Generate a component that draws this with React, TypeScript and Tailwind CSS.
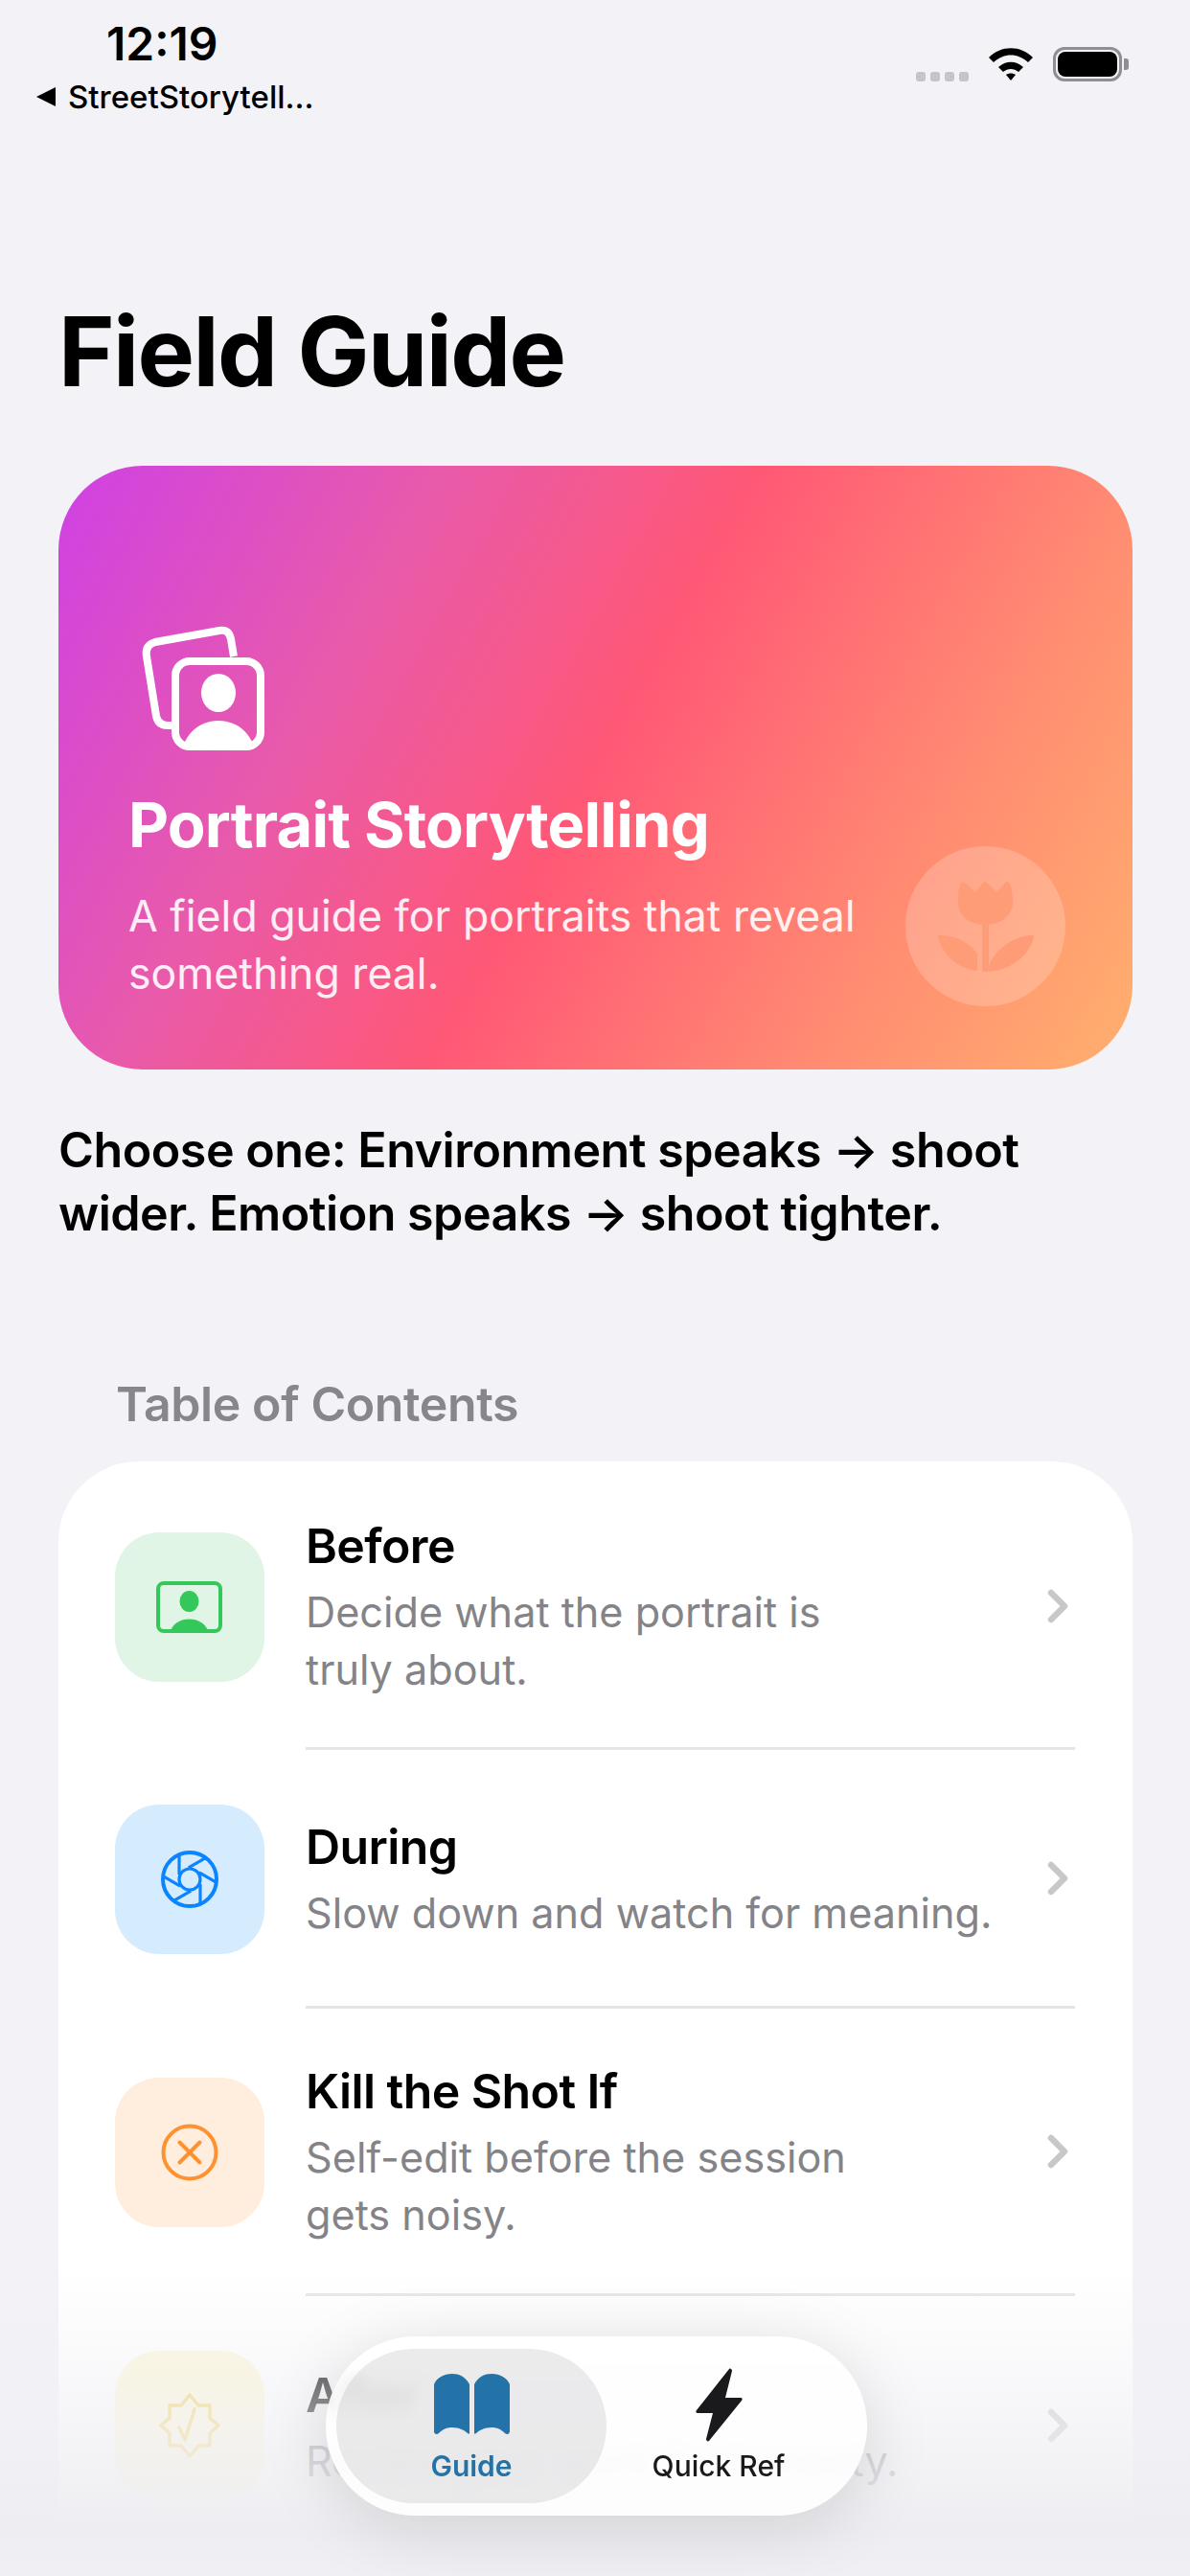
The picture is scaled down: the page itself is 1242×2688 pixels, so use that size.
const font = "font-['Inter',sans-serif]";

function PortraitIcon() {
  return (
    <svg width="130" height="131" viewBox="0 0 130 131" className="block">
      <path d="M32 104H28Q18 104 16 94L6 32Q4 20 15 17L82 5Q92 3 94 14L97 32" fill="none" stroke="white" strokeWidth="8" />
      <rect x="36" y="37" width="89" height="89" rx="15" fill="none" stroke="white" strokeWidth="8" />
      <ellipse cx="81" cy="70" rx="18" ry="20" fill="white" />
      <path d="M44 126C50 108 65 99 81 99C97 99 112 108 118 126z" fill="white" />
    </svg>
  );
}

function TulipIcon() {
  return (
    <svg width="101" height="94" viewBox="0 0 101 94" fill="#ff9c78" className="block">
      <path d="M22 22C22 10 23 4 25 1C26 0 28 0 29 1L40 11L48 1C49 0 51 0 52 1L62 11L71 1C72 0 74 0 75 1C77 4 79 10 79 22C79 36 66 45 50 45C35 45 22 36 22 22Z" />
      <path d="M47 45h7v43C60 72 78 57 99 56c2 0 2 1 2 3C94 80 74 94 50 94c-2 0-3-1-3-3z" />
      <path d="M1 59c-1-2 0-3 2-3 16 0 30 7 39 19v18C23 91 8 79 1 59z" />
    </svg>
  );
}

function PersonCardIcon() {
  return (
    <svg width="70" height="54" viewBox="0 0 70 54" className="block">
      <rect x="2" y="2" width="65" height="50" rx="6" fill="none" stroke="#34c759" strokeWidth="4" />
      <ellipse cx="34.5" cy="21" rx="10" ry="11" fill="#34c759" />
      <path d="M15 52a20 16 0 0 1 39 0z" fill="#34c759" />
    </svg>
  );
}

function ApertureIcon() {
  return (
    <svg width="60" height="60" viewBox="0 0 60 60" fill="none" stroke="#0a84ff" strokeWidth="3.2" className="block">
      <circle cx="30" cy="30" r="28" strokeWidth="4" />
      <circle cx="30" cy="30" r="11" />
      {[0, 60, 120, 180, 240, 300].map((deg) => (
        <line key={deg} x1="19" y1="5" x2="19" y2="25" transform={`rotate(${deg} 30 30)`} />
      ))}
    </svg>
  );
}

function XCircleIcon() {
  return (
    <svg width="60" height="60" viewBox="0 0 60 60" fill="none" stroke="#ff9230" strokeWidth="4" className="block">
      <circle cx="30" cy="30" r="27.5" />
      <path d="M19.5 19.5l21 21M40.5 19.5l-21 21" strokeLinecap="round" />
    </svg>
  );
}

function SealIcon() {
  return (
    <svg width="66" height="68" viewBox="0 0 66 68" fill="none" stroke="#f5d265" strokeWidth="3.5" className="block">
      <path d="M33 2l9 11h12v13l9 8-9 8v13H42l-9 11-9-11H12V42l-9-8 9-8V13h12z" strokeLinejoin="round" />
      <path d="M22 36l6 13 10-32" strokeLinecap="round" strokeLinejoin="round" />
    </svg>
  );
}

function Chevron() {
  return (
    <svg width="22" height="36" viewBox="0 0 22 36" fill="none" stroke="#c8c8ca" strokeWidth="6.5" strokeLinecap="round" strokeLinejoin="round" className="block mr-[7px]">
      <path d="M4 4l14 14L4 32" />
    </svg>
  );
}

const rows = [
  {
    title: "Before",
    sub: ["Decide what the portrait is", "truly about."],
    tile: "bg-[#e0f5e5]",
    icon: <PersonCardIcon />,
    rowClass: "h-[298px]",
  },
  {
    title: "During",
    sub: ["Slow down and watch for meaning."],
    tile: "bg-[#d5ebfe]",
    icon: <ApertureIcon />,
    rowClass: "h-[270px]",
  },
  {
    title: "Kill the Shot If",
    sub: ["Self-edit before the session", "gets noisy."],
    tile: "bg-[#ffeede]",
    icon: <XCircleIcon />,
    rowClass: "h-[300px]",
  },
  {
    title: "After",
    sub: ["Review your work for honesty."],
    tile: "bg-[#fdf7d9]",
    icon: <SealIcon />,
    rowClass: "h-[270px]",
  },
];

export default function App() {
  return (
    <div className={`relative w-[1242px] h-[2688px] overflow-hidden bg-[#f2f2f7] ${font}`}>
      {/* Status bar */}
      <div className="flex justify-between h-[125px] pl-[37px] pr-[64px]">
        <div className="flex flex-col">
          <div className="pl-[74px] pt-[20px] text-[48px] leading-[52px] font-semibold text-black">12:19</div>
          <div className="flex items-center gap-[12px] mt-[11px]">
            <svg width="22" height="22" viewBox="0 0 22 22"><path d="M1 11L21 1v20z" fill="black" /></svg>
            <span className="text-[33px] leading-[36px] font-medium text-black">StreetStorytell...</span>
          </div>
        </div>
        <div className="flex items-end gap-[20px] h-[85px]">
          <div className="flex gap-[5px]">
            <div className="w-[10px] h-[10px] rounded-[3px] bg-[#c5c5c9]" />
            <div className="w-[10px] h-[10px] rounded-[3px] bg-[#c5c5c9]" />
            <div className="w-[10px] h-[10px] rounded-[3px] bg-[#c5c5c9]" />
            <div className="w-[10px] h-[10px] rounded-[3px] bg-[#c5c5c9]" />
          </div>
          <svg width="48" height="36" viewBox="0 0 48 36" className="block">
            <path d="M1 11C14-2 34-2 47 11l-5 5C31 6 17 6 6 16z" />
            <path d="M11 21c8-7 18-7 26 0l-5 5c-5-4-11-4-16 0z" />
            <path d="M19 29c3-2 7-2 10 0l-5 6z" />
          </svg>
          <div className="flex items-center gap-[2px]">
            <div className="w-[72px] h-[36px] rounded-[12px] border-[3px] border-[#8e8e93] p-[2px]">
              <div className="w-full h-full rounded-[8px] bg-black" />
            </div>
            <div className="w-[5px] h-[12px] rounded-r-[3px] bg-[#8e8e93]" />
          </div>
        </div>
      </div>

      <div className="pl-[61px] pr-[60px]">
        <h1 className="mt-[212px] text-[100px] leading-[60px] font-bold text-black tracking-[-1.6px]">Field Guide</h1>

        {/* Hero */}
        <div className="relative mt-[89px] h-[630px] rounded-[88px] bg-[linear-gradient(119deg,#cf41e4_0%,#e85aab_27%,#ff5876_50%,#ff8a72_76%,#ffb06e_100%)] pl-[73px] pt-[167px] overflow-hidden">
          <div className="ml-[13px]">
            <PortraitIcon />
          </div>
          <div className="mt-[39px] text-[65px] leading-[76px] font-bold text-white tracking-[-0.8px]">Portrait Storytelling</div>
          <div className="mt-[27px] text-[44.6px] leading-[60px] text-white/90">
            A field guide for portraits that reveal
            <br />
            something real.
          </div>
          <div className="absolute left-[884px] top-[397px] w-[167px] h-[167px] rounded-full bg-white/20 flex items-center justify-center">
            <TulipIcon />
          </div>
        </div>

        <p className="mt-[51px] text-[50.2px] leading-[66px] font-semibold text-black tracking-[-0.5px]">
          Choose one: Environment speaks → shoot
          <br />
          wider. Emotion speaks → shoot tighter.
        </p>

        <div className="mt-[136px] pl-[60px] text-[50px] leading-[60px] font-semibold text-[#86868b] tracking-[-0.4px]">Table of Contents</div>

        {/* Contents list */}
        <div className="mt-[30px] rounded-[84px] bg-white pl-[59px] pr-[60px] pt-[3px] pb-[100px]">
          {rows.map((row, i) => (
            <div key={row.title} className={`flex items-center ${row.rowClass}`}>
              <div className={`flex items-center justify-center shrink-0 w-[156px] h-[156px] rounded-[46px] ${row.tile}`}>{row.icon}</div>
              <div className={`flex items-center ml-[43px] flex-1 h-full ${i < rows.length - 1 ? "border-b-[3px] border-[#e5e5e7]" : ""}`}>
                <div className="flex-1 pt-[4px]">
                  <div className="text-[50px] leading-[60px] font-semibold text-black tracking-[-0.6px]">{row.title}</div>
                  <div className="mt-[9px]">
                    {row.sub.map((line) => (
                      <div key={line} className="text-[43.2px] leading-[60px] text-[#848488]">{line}</div>
                    ))}
                  </div>
                </div>
                <Chevron />
              </div>
            </div>
          ))}
        </div>
      </div>

      {/* Bottom fade behind the floating tab bar */}
      <div className="absolute left-0 right-0 bottom-0 h-[320px] bg-[linear-gradient(to_bottom,rgba(242,242,247,0)_0%,rgba(241,241,245,0.66)_50%,#eeeef2_85%,#f0f0f4_100%)]" />

      {/* Floating tab bar */}
      <div className="absolute left-[340px] top-[2438px] w-[565px] h-[187px] rounded-full bg-white/85 backdrop-blur-[8px] shadow-[0_12px_70px_rgba(0,0,0,0.13)] flex items-center pl-[11px]">
        <div className="flex flex-col items-center pt-[19px] w-[282px] h-[161px] rounded-full bg-[#767680]/15">
          <div className="flex items-center justify-center h-[78px]">
            <svg width="79" height="64" viewBox="0 0 79 64" fill="#2473a8" className="block">
              <path d="M37 11C33 3 26 0 19 0C10 0 3 4 0 11V60C0 63 3 64 5 62C9 58 13 56 19 56C26 56 32 59 35 62C36 63 37 63 37 62Z" />
              <path d="M42 11C46 3 53 0 60 0C69 0 76 4 79 11V60C79 63 76 64 74 62C70 58 66 56 60 56C53 56 47 59 44 62C43 63 42 63 42 62Z" />
            </svg>
          </div>
          <span className="mt-[7px] text-[30px] leading-[36px] font-semibold text-[#2473a8]">Guide</span>
        </div>
        <div className="flex flex-col items-center pt-[19px] w-[234px] h-[161px]">
          <div className="flex items-center justify-center h-[78px]">
            <svg width="49" height="77" viewBox="0 0 49 77" fill="#1a1a1c" className="block">
              <path d="M35 1c1-1 3 0 3 2l-7 28h16c2 0 2 2 1 3L14 76c-1 1-3 0-3-2l7-27H2c-2 0-2-2-1-3z" />
            </svg>
          </div>
          <span className="mt-[7px] text-[30px] leading-[36px] font-medium text-[#1a1a1c]">Quick Ref</span>
        </div>
      </div>
    </div>
  );
}
